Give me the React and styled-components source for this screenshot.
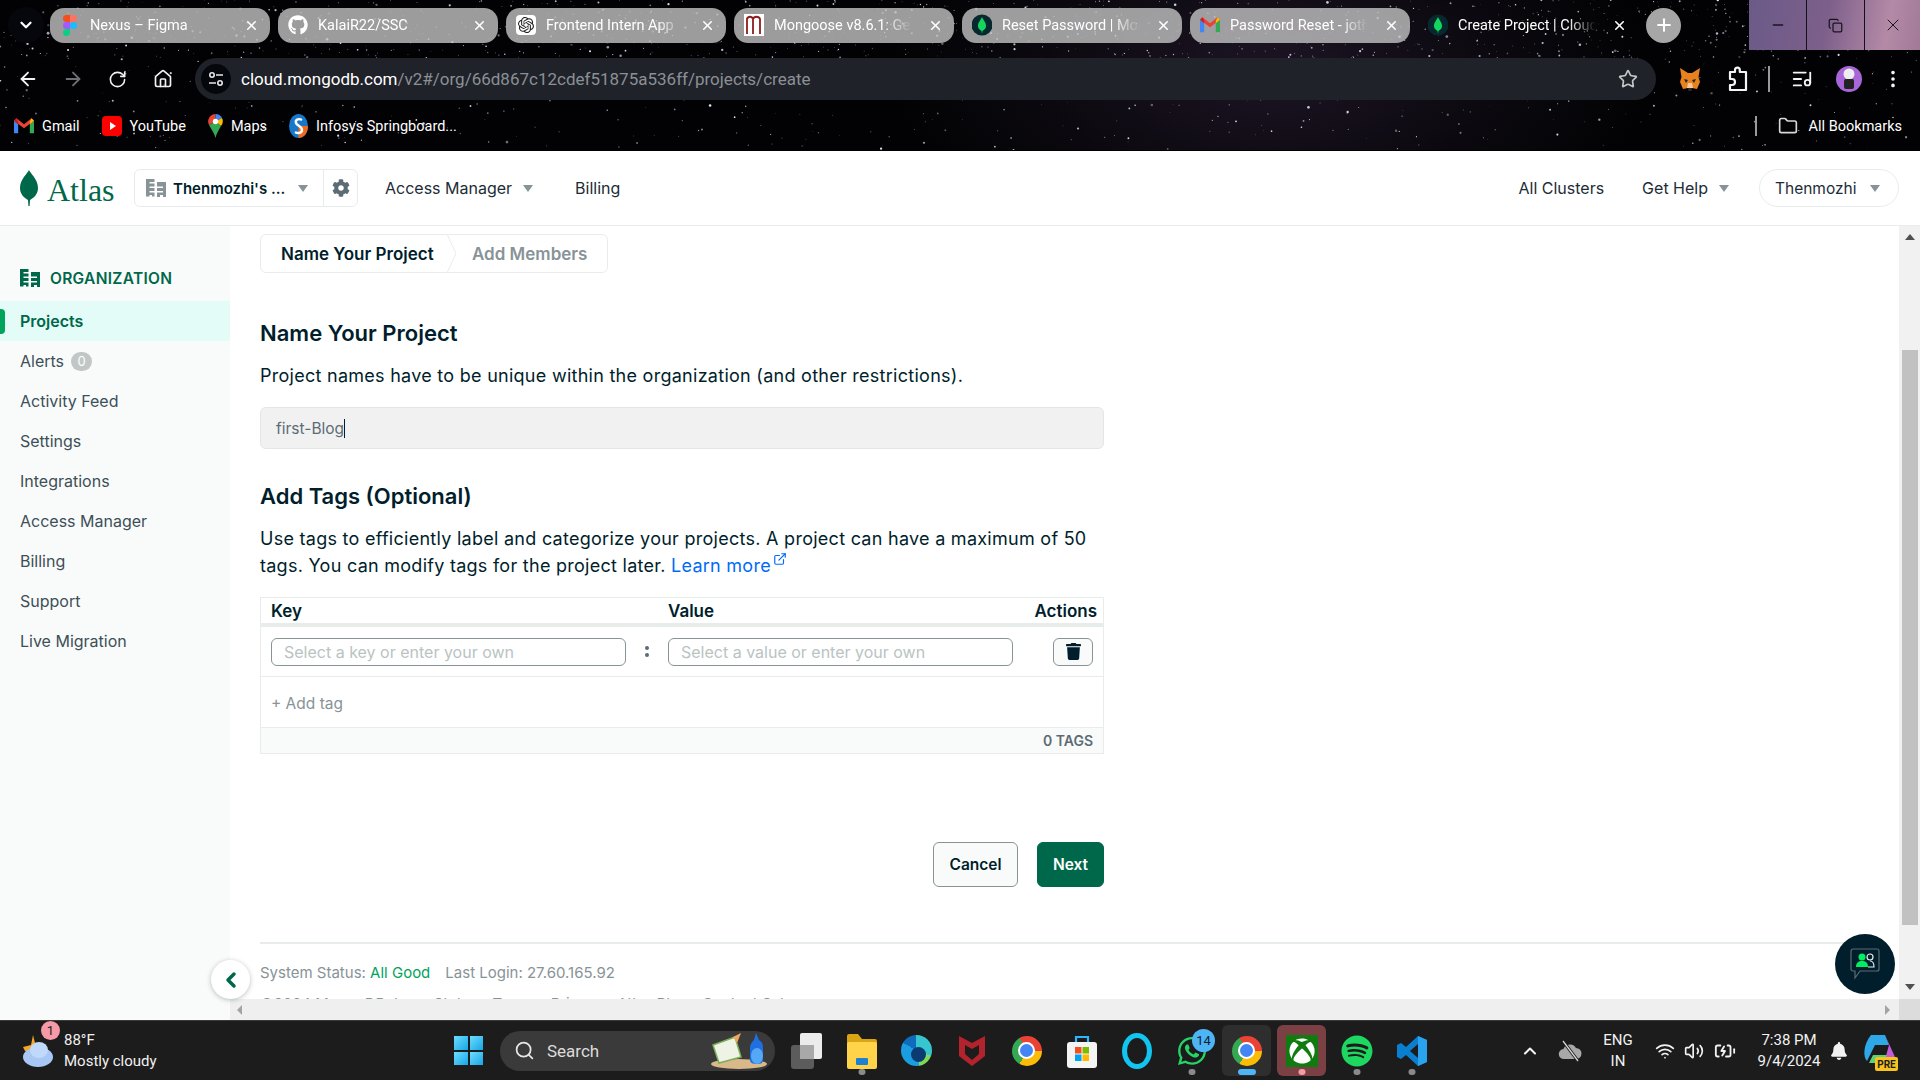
import React from "react";
import styled, { createGlobalStyle } from "styled-components";
import {
  ArrowLeft,
  ArrowRight,
  RotateCw,
  Home,
  Star,
  EllipsisVertical,
  ListMusic,
  Folder,
  Search,
  Wifi,
  Volume2,
  BatteryCharging,
  ChevronUp,
  ChevronDown,
  ChevronLeft,
  Plus,
  X,
  Minus,
  Copy,
  ExternalLink,
} from "lucide-react";
import { FaGithub, FaWhatsapp, FaSpotify, FaXbox, FaTrash, FaCog, FaBell } from "react-icons/fa";
import { SiOpenai } from "react-icons/si";

const UI = `"Inter", "Lato", sans-serif`;
const SYS = `"Roboto", "Noto Sans", sans-serif`;

const Global = createGlobalStyle`
  html, body { margin: 0; padding: 0; background: #fff; }
  * { box-sizing: border-box; }
  #root { width: 1920px; height: 1080px; overflow: hidden; }
`;

const Page = styled.div`
  width: 1920px;
  height: 1080px;
  display: flex;
  flex-direction: column;
  font-family: ${UI};
  color: #001e2b;
`;

/* browser frame */
const Frame = styled.div`
  position: relative;
  height: 151px;
  flex: none;
  background: radial-gradient(ellipse 380px 200px at 1270px 70px, #1d1424 0%, #0b090f 60%, #020204 100%);
  overflow: hidden;
  font-family: ${SYS};
  color: #fff;
  border-bottom: 1px solid #000;
`;
const StarLayer = styled.svg`
  position: absolute;
  left: 0;
  top: 0;
`;
const TabStrip = styled.div`
  position: relative;
  height: 50px;
  display: flex;
  align-items: center;
  gap: 8px;
  padding-left: 8px;
`;
const TabMenu = styled.div`
  width: 36px;
  height: 36px;
  margin-right: -2px;
  border-radius: 50%;
  background: #05070c;
  display: grid;
  place-items: center;
`;
const Tab = styled.div`
  width: 220px;
  height: 35px;
  flex: none;
  border-radius: 14px;
  background: ${(p) => (p.$active ? "transparent" : "rgba(190,190,190,0.82)")};
  display: flex;
  align-items: center;
  gap: 10px;
  padding: 0 11px 0 10px;
  font-size: 14.5px;
`;
const TabIcon = styled.span`
  width: 20px;
  height: 22px;
  flex: none;
  display: grid;
  place-items: center;
`;
const TabTitle = styled.span`
  flex: 1;
  min-width: 0;
  margin-right: 6px;
  white-space: nowrap;
  overflow: hidden;
  mask-image: linear-gradient(to right, #000 80%, transparent);
`;
const NewTab = styled.div`
  width: 35px;
  height: 35px;
  border-radius: 50%;
  background: #a6a6a6;
  display: grid;
  place-items: center;
`;
const WinControls = styled.div`
  margin-left: auto;
  width: 171px;
  height: 50px;
  display: grid;
  grid-template-columns: 57px 58px 56px;
  background: linear-gradient(100deg, #6b5a88 0%, #7d5f8b 45%, #b48aa6 80%, #a07a98 100%);
`;
const WinButton = styled.div`
  display: grid;
  place-items: center;
  color: #1a1420;
  border-left: ${(p) => (p.$line ? "1px solid #14101a" : "none")};
`;
const Toolbar = styled.div`
  position: relative;
  height: 42px;
  margin-top: 8px;
  display: flex;
  align-items: center;
  padding-left: 5px;
`;
const NavBtn = styled.div`
  width: 45px;
  display: grid;
  place-items: center;
  color: ${(p) => (p.$dim ? "#6d7076" : "#f2f2f2")};
`;
const AddressBar = styled.div`
  width: 1461px;
  height: 42px;
  margin-left: 10px;
  border-radius: 21px;
  background: #1f2229;
  display: flex;
  align-items: center;
  padding: 0 18px 0 6px;
  font-size: 17px;
`;
const SiteInfo = styled.div`
  width: 30px;
  height: 30px;
  border-radius: 50%;
  background: #05070c;
  display: grid;
  place-items: center;
  margin-right: 10px;
`;
const Url = styled.div`
  flex: 1;
  color: #8b9096;
  b {
    font-weight: 400;
    color: #fff;
  }
`;
const ToolSlot = styled.div`
  width: ${(p) => p.$w}px;
  display: grid;
  place-items: center;
  color: #f4f4f4;
`;
const ToolGroup = styled.div`
  display: flex;
  align-items: center;
  margin-left: 11px;
`;
const VBar = styled.div`
  width: 2px;
  height: ${(p) => p.$h}px;
  background: #9a9a9a;
`;
const Avatar = styled.div`
  width: 26px;
  height: 26px;
  border-radius: 50%;
  background: #a866d8;
  display: grid;
  place-items: center;
`;
const Bookmarks = styled.div`
  position: relative;
  height: 32px;
  margin-top: 10px;
  display: flex;
  align-items: center;
  gap: 22px;
  padding: 0 18px 0 14px;
  font-size: 14.5px;
`;
const Bookmark = styled.div`
  display: flex;
  align-items: center;
  gap: 8px;
`;
const BookmarkEnd = styled.div`
  margin-left: auto;
  display: flex;
  align-items: center;
  gap: 11px;
  svg {
    margin-left: 10px;
  }
`;

/* atlas header */
const Header = styled.header`
  height: 75px;
  flex: none;
  background: #fff;
  border-bottom: 1px solid #e8edeb;
  display: flex;
  align-items: center;
  padding: 0 21px 0 20px;
  font-size: 16px;
  color: #1c2d38;
`;
const Logo = styled.div`
  width: 114px;
  display: flex;
  align-items: center;
  gap: 9px;
`;
const LogoText = styled.span`
  font-family: "Liberation Serif", serif;
  font-size: 32px;
  color: #00684a;
  margin-top: 5px;
`;
const OrgPicker = styled.div`
  width: 224px;
  height: 38px;
  border: 1px solid #e8edeb;
  border-radius: 6px;
  display: flex;
  align-items: center;
`;
const OrgMain = styled.div`
  width: 189px;
  height: 100%;
  border-right: 1px solid #e8edeb;
  display: flex;
  align-items: center;
  padding-left: 11px;
  gap: 7px;
  font-size: 15px;
  font-weight: 600;
  color: #001e2b;
`;
const OrgName = styled.span`
  width: 118px;
  white-space: nowrap;
`;
const Gear = styled.div`
  flex: 1;
  display: grid;
  place-items: center;
  color: #5c6c75;
`;
const Caret = styled.span`
  width: 0;
  height: 0;
  border-left: 5.5px solid transparent;
  border-right: 5.5px solid transparent;
  border-top: 7px solid #889397;
  flex: none;
`;
const HeadLink = styled.div`
  display: flex;
  align-items: center;
  gap: 11px;
  margin-left: ${(p) => p.$ml}px;
`;
const UserPill = styled.div`
  width: 140px;
  height: 38px;
  margin-left: 30px;
  border: 1px solid #e8edeb;
  border-radius: 19px;
  display: flex;
  align-items: center;
  gap: 13px;
  padding-left: 15px;
  font-size: 15.5px;
`;

/* page body */
const Body = styled.div`
  position: relative;
  flex: 1;
  min-height: 0;
  display: flex;
`;
const Sidebar = styled.nav`
  width: 230px;
  flex: none;
  background: #f9fbfa;
  padding-top: 32px;
  font-size: 16px;
  color: #3d4f58;
`;
const SideTitle = styled.div`
  height: 40px;
  margin-bottom: 3px;
  padding-left: 20px;
  display: flex;
  align-items: center;
  gap: 10px;
  font-size: 15.5px;
  font-weight: 600;
  letter-spacing: 0.3px;
  color: #00684a;
`;
const SideItem = styled.div`
  position: relative;
  height: 40px;
  padding-left: 20px;
  display: flex;
  align-items: center;
  gap: 7px;
  background: ${(p) => (p.$active ? "#e3fcf7" : "transparent")};
  color: ${(p) => (p.$active ? "#00684a" : "inherit")};
  font-weight: ${(p) => (p.$active ? 600 : 400)};
  &::before {
    content: "";
    display: ${(p) => (p.$active ? "block" : "none")};
    position: absolute;
    left: 0;
    top: 8px;
    width: 5px;
    height: 25px;
    border-radius: 0 4px 4px 0;
    background: #00a35c;
  }
`;
const Count = styled.span`
  width: 21px;
  height: 19px;
  border-radius: 10px;
  background: #c1c7c6;
  color: #fff;
  font-size: 13px;
  display: grid;
  place-items: center;
`;
const ContentArea = styled.div`
  flex: 1;
  min-width: 0;
  display: flex;
  flex-direction: column;
`;
const ScrollRow = styled.div`
  flex: 1;
  min-height: 0;
  display: flex;
`;
const ScrollView = styled.main`
  flex: 1;
  min-width: 0;
  overflow: hidden;
  padding: 8px 14px 0 30px;
`;
const VTrack = styled.div`
  width: 21px;
  flex: none;
  background: #f1f1f1;
  display: flex;
  flex-direction: column;
  align-items: center;
  padding: 8px 0 9px;
`;
const VThumb = styled.div`
  width: 16px;
  height: 575px;
  margin-top: 110px;
  margin-bottom: auto;
  background: #c1c1c1;
`;
const HTrack = styled.div`
  height: 21px;
  flex: none;
  background: #efefef;
  display: flex;
  align-items: center;
  justify-content: space-between;
  padding: 0 30px 0 7px;
  position: relative;
`;
const Corner = styled.div`
  position: absolute;
  right: 0;
  top: 0;
  width: 21px;
  height: 21px;
  background: #dcdcdc;
`;
const Arrow = styled.span`
  width: 0;
  height: 0;
  border-style: solid;
  ${(p) =>
    p.$dir === "up"
      ? "border-width: 0 5px 6px; border-color: transparent transparent #505050;"
      : p.$dir === "down"
      ? "border-width: 6px 5px 0; border-color: #505050 transparent transparent;"
      : p.$dir === "left"
      ? "border-width: 5px 5px 5px 0; border-color: transparent #a3a3a3 transparent transparent;"
      : "border-width: 5px 0 5px 5px; border-color: transparent transparent transparent #a3a3a3;"}
`;
const Stepper = styled.div`
  width: 348px;
  height: 39px;
  border: 1px solid #e8edeb;
  border-radius: 6px;
  display: flex;
  align-items: center;
  font-size: 17px;
  font-weight: 600;
  position: relative;
`;
const Step = styled.div`
  width: ${(p) => p.$w}px;
  padding-left: ${(p) => p.$pl}px;
  color: ${(p) => (p.$on ? "#001e2b" : "#889397")};
  white-space: nowrap;
`;
const StepChevron = styled.svg`
  flex: none;
  margin-left: -2px;
`;
const Form = styled.div`
  width: 844px;
`;
const Heading = styled.h2`
  margin: ${(p) => p.$mt}px 0 0;
  font-size: 22px;
  line-height: 30px;
  font-weight: 600;
  color: #001e2b;
`;
const Para = styled.p`
  margin: 14px 0 0;
  font-size: 18px;
  letter-spacing: 0.27px;
  line-height: 27px;
  color: #001e2b;
`;
const NameField = styled.div`
  height: 42px;
  margin-top: 18px;
  background: #f1f1f1;
  border: 1px solid #e3e6e5;
  border-radius: 6px;
  padding-left: 15px;
  display: flex;
  align-items: center;
  font-size: 15.5px;
  color: #5c6c75;
`;
const TextCaret = styled.span`
  width: 1px;
  height: 19px;
  background: #001e2b;
`;
const LearnMore = styled.a`
  color: #016bf8;
  svg {
    vertical-align: 6px;
    margin-left: 2px;
  }
`;
const TagTable = styled.div`
  margin-top: 18px;
  border: 1px solid #e8edeb;
`;
const TagGrid = styled.div`
  display: grid;
  grid-template-columns: 355px 42px 345px 1fr;
  padding: 0 8px 0 10px;
  align-items: center;
`;
const TagHead = styled(TagGrid)`
  height: 29px;
  border-bottom: 4px solid #e8edeb;
  font-size: 17px;
  font-weight: 600;
  padding-right: 6px;
`;
const HeadRight = styled.span`
  justify-self: end;
`;
const TagRow = styled(TagGrid)`
  height: 50px;
  border-bottom: 1px solid #e8edeb;
`;
const TagInput = styled.input`
  width: 100%;
  height: 28px;
  border: 1px solid #889397;
  border-radius: 6px;
  padding: 0 12px;
  font: 400 16px ${UI};
  background: #fff;
  &::placeholder {
    color: #b8c4c2;
    opacity: 1;
  }
`;
const Colon = styled.span`
  justify-self: center;
  display: flex;
  flex-direction: column;
  gap: 3px;
  i {
    width: 4px;
    height: 4px;
    border-radius: 50%;
    background: #5c6c75;
  }
`;
const TrashBtn = styled.div`
  justify-self: end;
  width: 40px;
  height: 28px;
  margin-right: 2px;
  border: 1px solid #889397;
  border-radius: 6px;
  background: #f9fbfa;
  display: grid;
  place-items: center;
  color: #001e2b;
`;
const AddTag = styled.div`
  height: 50px;
  padding: 3px 0 0 10px;
  display: flex;
  align-items: center;
  font-size: 15.5px;
  color: #889397;
`;
const TagFooter = styled.div`
  height: 26px;
  border-top: 1px solid #e8edeb;
  background: #f9fbfa;
  padding-right: 10px;
  display: flex;
  align-items: center;
  justify-content: flex-end;
  font-size: 14px;
  font-weight: 600;
  color: #5c6c75;
`;
const Actions = styled.div`
  margin-top: 88px;
  display: flex;
  justify-content: flex-end;
  gap: 19px;
`;
const Button = styled.button`
  height: 45px;
  width: ${(p) => p.$w}px;
  border-radius: 6px;
  border: 1px solid ${(p) => (p.$primary ? "#00684a" : "#889397")};
  background: ${(p) => (p.$primary ? "#00684a" : "#f9fbfa")};
  color: ${(p) => (p.$primary ? "#fff" : "#001e2b")};
  font: 600 15.5px ${UI};
`;
const Rule = styled.div`
  margin-top: 55px;
  height: 2px;
  background: #e8edeb;
`;
const FootLine = styled.div`
  margin-top: ${(p) => p.$mt}px;
  display: flex;
  gap: ${(p) => p.$gap}px;
  font-size: 15px;
  line-height: 22px;
  color: #889397;
  white-space: nowrap;
  em {
    font-style: normal;
    color: #00a35c;
  }
`;
const CollapseBtn = styled.div`
  position: absolute;
  left: 211px;
  bottom: 21px;
  width: 39px;
  height: 39px;
  border-radius: 50%;
  background: #fff;
  box-shadow: 0 1px 5px rgba(0, 30, 43, 0.28);
  display: grid;
  place-items: center;
  color: #00684a;
`;
const ChatBubble = styled.div`
  position: absolute;
  right: 25px;
  bottom: 26px;
  width: 60px;
  height: 60px;
  border-radius: 50%;
  background: #001e2b;
  display: grid;
  place-items: center;
`;

/* taskbar */
const Taskbar = styled.footer`
  height: 60px;
  flex: none;
  background: #1c1c1c;
  border-top: 1px solid #3a3a3a;
  display: flex;
  align-items: center;
  padding-left: 23px;
  font-family: ${SYS};
  color: #f0f0f0;
`;
const Weather = styled.div`
  position: relative;
  width: 431px;
  display: flex;
  align-items: center;
  gap: 9px;
`;
const WeatherText = styled.div`
  font-size: 15px;
  line-height: 21px;
`;
const RedBadge = styled.span`
  position: absolute;
  left: 18px;
  top: -9px;
  width: 19px;
  height: 19px;
  border-radius: 50%;
  background: #f59aa6;
  color: #1c1c1c;
  font-size: 13px;
  display: grid;
  place-items: center;
`;
const WinLogo = styled.div`
  width: 29px;
  height: 29px;
  margin-right: 17px;
  display: grid;
  grid-template-columns: 1fr 1fr;
  gap: 2px;
  i {
    background: linear-gradient(135deg, #6fdcff, #15a6e6);
  }
`;
const SearchPill = styled.div`
  width: 275px;
  height: 40px;
  border-radius: 20px;
  background: #3a3a3a;
  display: flex;
  align-items: center;
  gap: 12px;
  padding-left: 14px;
  font-size: 17px;
  color: #dcdcdc;
`;
const SearchArt = styled.svg`
  margin-left: auto;
  margin-right: 6px;
`;
const TaskIcons = styled.div`
  margin-left: 4px;
  display: flex;
`;
const TaskSlot = styled.div`
  position: relative;
  width: 55px;
  height: 59px;
  display: grid;
  place-items: center;
  &::before {
    content: "";
    display: ${(p) => (p.$bg ? "block" : "none")};
    position: absolute;
    left: 3px;
    right: 3px;
    top: 4px;
    bottom: 4px;
    border-radius: 6px;
    background: ${(p) => p.$bg};
  }
  &::after {
    content: "";
    display: ${(p) => (p.$dot ? "block" : "none")};
    position: absolute;
    left: 50%;
    bottom: 5px;
    width: ${(p) => (p.$wide ? 18 : 7)}px;
    height: 6px;
    border-radius: 3px;
    transform: translateX(-50%);
    background: ${(p) => p.$dot};
  }
  > * {
    position: relative;
  }
`;
const CountBadge = styled.span`
  position: absolute;
  left: 28px;
  top: 8px;
  width: 23px;
  height: 23px;
  border-radius: 50%;
  background: #4db5f5;
  color: #10222e;
  font-size: 13px;
  display: grid;
  place-items: center;
`;
const ChromeMark = styled.span`
  width: ${(p) => p.$s}px;
  height: ${(p) => p.$s}px;
  border-radius: 50%;
  flex: none;
  background: conic-gradient(#ea4335 0deg 90deg, #fbbc05 90deg 210deg, #34a853 210deg 330deg, #ea4335 330deg);
  display: grid;
  place-items: center;
  &::after {
    content: "";
    width: 46%;
    height: 46%;
    border-radius: 50%;
    background: #4285f4;
    border: ${(p) => Math.round(p.$s / 14)}px solid #fff;
    box-sizing: content-box;
  }
`;
const EdgeMark = styled.span`
  width: 31px;
  height: 31px;
  border-radius: 50%;
  background: conic-gradient(#37c6d0 0deg 110deg, #7ed957 110deg 170deg, #1b9de2 170deg 300deg, #0f6cbd 300deg);
  display: grid;
  place-items: center;
  &::after {
    content: "";
    width: 15px;
    height: 15px;
    margin: 8px 0 0 4px;
    border-radius: 50%;
    background: #0c3b73;
  }
`;
const AlexaRing = styled.span`
  width: 30px;
  height: 36px;
  border-radius: 50%;
  border: 5px solid #12c4f0;
`;
const Tray = styled.div`
  margin-left: auto;
  display: flex;
  align-items: center;
  height: 100%;
`;
const TraySlot = styled.div`
  width: ${(p) => p.$w}px;
  display: grid;
  place-items: center;
  text-align: center;
  font-size: 15px;
  line-height: 21px;
  color: #f2f2f2;
  white-space: nowrap;
`;

/* drawn marks */
function Leaf({ h = 36, color = "#00684a" }) {
  return (
    <svg width={h / 2} height={h} viewBox="0 0 18 36">
      <path
        d="M9 0C10 3 18 9 18 18C18 25 13 28 10 30L9.6 36H8.4L8 30C5 28 0 25 0 18C0 9 8 3 9 0Z"
        fill={color}
      />
    </svg>
  );
}

function LeafBadge() {
  return (
    <svg width="20" height="22" viewBox="0 0 20 22">
      <circle cx="10" cy="11" r="10.5" fill="#07282f" />
      <path d="M10 3C11 6 14 8 14 12C14 15 11.5 16 10.5 17L10 20L9.5 17C8.5 16 6 15 6 12C6 8 9 6 10 3Z" fill="#13d65f" />
    </svg>
  );
}

function OrgIcon({ color, size = 20 }) {
  return (
    <svg width={size} height={size} viewBox="0 0 20 20" fill={color}>
      <path d="M0 1h8.5v3H3.5v1.5h5v3h-5V10h5v3h-5v1.5h5v4H6v-1.5H3.5v1.5H0z" />
      <path d="M11 4h9v15h-3v-2h-3v2h-3v-4.5h6V13h-6v-3h6V8.5h-6z" />
    </svg>
  );
}

function GmailMark({ size = 20 }) {
  return (
    <svg width={size} height={size * 0.78} viewBox="0 0 24 18">
      <path d="M0 3v15h5V7z" fill="#4285f4" />
      <path d="M24 3v15h-5V7z" fill="#34a853" />
      <path d="M0 3l12 9 12-9-3-3-9 7-9-7z" fill="#ea4335" />
      <path d="M19 7v-3l2-4 3 3z" fill="#fbbc05" />
      <path d="M5 7V4L3 0 0 3z" fill="#c5221f" />
    </svg>
  );
}

function FigmaMark() {
  return (
    <svg width="14" height="21" viewBox="0 0 14 21">
      <path d="M0 3.5A3.5 3.5 0 0 1 3.5 0H7v7H3.5A3.5 3.5 0 0 1 0 3.5z" fill="#f24e1e" />
      <path d="M7 0h3.5a3.5 3.5 0 0 1 0 7H7z" fill="#ff7262" />
      <path d="M0 10.5A3.5 3.5 0 0 1 3.5 7H7v7H3.5A3.5 3.5 0 0 1 0 10.5z" fill="#a259ff" />
      <circle cx="10.5" cy="10.5" r="3.5" fill="#1abcfe" />
      <path d="M0 17.5A3.5 3.5 0 0 1 3.5 14H7v3.5a3.5 3.5 0 0 1-7 0z" fill="#0acf83" />
    </svg>
  );
}

function MongooseMark() {
  return (
    <svg width="20" height="22" viewBox="0 0 20 22">
      <rect width="20" height="22" fill="#fff" />
      <path d="M3 20V4M3 5C4 2 8 2 9 5V20M9 5C10 2 15 2 16 5V20" stroke="#8e1c1c" strokeWidth="1.8" fill="none" />
    </svg>
  );
}

function YoutubeMark() {
  return (
    <svg width="20" height="20" viewBox="0 0 20 20">
      <rect width="20" height="20" rx="4" fill="#f00" />
      <path d="M8 6l6 4-6 4z" fill="#fff" />
    </svg>
  );
}

function MapsPin() {
  return (
    <svg width="15" height="24" viewBox="0 0 15 24">
      <path d="M7.5 0A7.5 7.5 0 0 0 1 11L7.5 7.5z" fill="#ea4335" />
      <path d="M7.5 0A7.5 7.5 0 0 1 14 4L7.5 7.5z" fill="#4285f4" />
      <path d="M14 4A7.5 7.5 0 0 1 13 12L7.5 7.5z" fill="#fbbc05" />
      <path d="M1 11L7.5 7.5 13 12C11 16 8.5 19 7.5 24C6.5 19 3 15 1 11z" fill="#34a853" />
      <circle cx="7.5" cy="7.5" r="2.7" fill="#fff" />
    </svg>
  );
}

function InfosysMark() {
  return (
    <svg width="19" height="24" viewBox="0 0 19 24">
      <ellipse cx="9.5" cy="12" rx="9.5" ry="12" fill="#1877c9" />
      <path d="M9.5 12H19C19 19 15 24 9.5 24z" fill="#f06a21" />
      <path d="M13 6C9 4 6 6 7 9C8 12 13 12 13 16C13 19 9 20 6 18" stroke="#fff" strokeWidth="2.4" fill="none" />
    </svg>
  );
}

function FoxMark() {
  return (
    <svg width="22" height="24" viewBox="0 0 22 24">
      <path d="M1 1l8 5h4l8-5-1.5 9 1.5 5-3 7-5-1H9l-5 1-3-7 1.5-5z" fill="#e8821e" />
      <path d="M9 21h4l-.5 3h-3z" fill="#2a2a2a" />
      <path d="M5 12l4 1-2 3zM17 12l-4 1 2 3z" fill="#23262a" />
      <path d="M9 16h4l1 5H8z" fill="#f6c8a0" />
    </svg>
  );
}

function PuzzleMark() {
  return (
    <svg width="22" height="26" viewBox="0 0 22 26" fill="none" stroke="#f4f4f4" strokeWidth="2.2" strokeLinejoin="round">
      <path d="M4 6h5V4a2.4 2.4 0 0 1 4.8 0v2H20v18H4v-5h2a3 3 0 0 0 0-6H4z" />
    </svg>
  );
}

function SiteInfoMark() {
  return (
    <svg width="18" height="18" viewBox="0 0 18 18" fill="none" stroke="#e8e8e8" strokeWidth="1.6">
      <circle cx="5" cy="5" r="2.2" />
      <path d="M9 5h7M2 13h7" />
      <circle cx="13" cy="13" r="2.2" />
    </svg>
  );
}

function ShieldMark() {
  return (
    <svg width="26" height="30" viewBox="0 0 26 30">
      <path d="M0 0l13 7 13-7v20l-13 10L0 20z" fill="#b3232d" />
      <path d="M6 9l7 4 7-4v9l-7 6-7-6z" fill="#1c1c1c" />
    </svg>
  );
}

function StoreMark() {
  return (
    <svg width="30" height="34" viewBox="0 0 30 34">
      <path d="M9 9V3h12v6" stroke="#2fb5ff" strokeWidth="2.2" fill="none" />
      <rect y="8" width="30" height="26" rx="3" fill="#f4f4f4" />
      <rect x="8" y="13" width="6.5" height="6.5" fill="#f25022" />
      <rect x="15.5" y="13" width="6.5" height="6.5" fill="#7fba00" />
      <rect x="8" y="20.5" width="6.5" height="6.5" fill="#00a4ef" />
      <rect x="15.5" y="20.5" width="6.5" height="6.5" fill="#ffb900" />
    </svg>
  );
}

function CodeMark() {
  return (
    <svg width="30" height="30" viewBox="0 0 30 30">
      <path d="M21 0l9 4v22l-9 4-12-11-5 4-4-2V9l4-2 5 4z" fill="#0a7fd0" />
      <path d="M21 0l9 4v22l-9 4z" fill="#2aa3ef" />
      <path d="M21 8l-8 7 8 7z" fill="#1c1c1c" />
    </svg>
  );
}

function FilesMark() {
  return (
    <svg width="30" height="36" viewBox="0 0 30 36">
      <path d="M0 3a2 2 0 0 1 2-2h9l4 5h13a2 2 0 0 1 2 2v4H0z" fill="#d9a514" />
      <rect y="9" width="30" height="27" rx="2" fill="#ffd44a" />
      <rect x="9" y="25" width="12" height="7" rx="1" fill="#1f7fd0" />
    </svg>
  );
}

function TaskViewMark() {
  return (
    <svg width="31" height="36" viewBox="0 0 31 36">
      <rect y="12" width="23" height="24" rx="3" fill="#5c5c5c" />
      <rect x="9" width="22" height="26" rx="2" fill="#ececec" />
      <rect x="9" y="12" width="14" height="14" fill="#a8a8a8" />
    </svg>
  );
}

function WeatherMark() {
  return (
    <svg width="32" height="36" viewBox="0 0 32 36">
      <path d="M10 2l2 8 8 2-3 6H2l-2-4 8-2z" fill="#f5a623" />
      <ellipse cx="15" cy="24" rx="15" ry="10" fill="#a9c7f5" />
      <ellipse cx="16" cy="17" rx="9" ry="8" fill="#c0d8fa" />
    </svg>
  );
}

function CopilotMark() {
  return (
    <svg width="36" height="40" viewBox="0 0 36 40">
      <path d="M8 4h14l4 10H12L4 30C0 26 0 14 8 4z" fill="#2fa8e8" />
      <path d="M22 4l10 22c1 3 0 6-3 6h-8L26 14z" fill="#c45bd8" />
      <path d="M10 24h14l-4 8H6z" fill="#5ad17a" />
      <rect x="12" y="26" width="23" height="14" rx="2" fill="#f7c31c" />
      <text x="23.5" y="37" fontSize="10" fontWeight="700" textAnchor="middle" fill="#1c1c1c" fontFamily="Roboto, sans-serif">PRE</text>
    </svg>
  );
}

function SearchArtMark() {
  return (
    <SearchArt width="60" height="40" viewBox="0 0 60 40">
      <ellipse cx="30" cy="33" rx="28" ry="5" fill="#d9b98a" />
      <path d="M4 14l22-8 6 20-22 6z" fill="#eef3e5" stroke="#7cae5a" strokeWidth="1.5" />
      <path d="M24 6l8-4-4 10z" fill="#f0a55c" />
      <path d="M47 2l3 7c3 2 4 4 4 8v12c0 3-2 4-6 4s-7-1-7-4V17c0-4 2-6 4-8z" fill="#1f6fe0" />
      <ellipse cx="48" cy="25" rx="6" ry="8" fill="#55a8f5" />
    </SearchArt>
  );
}

function ChatMark() {
  return (
    <svg width="30" height="32" viewBox="0 0 30 32">
      <path d="M3 1h24a2 2 0 0 1 2 2v18a2 2 0 0 1-2 2H10l-5 7v-7H3a2 2 0 0 1-2-2V3a2 2 0 0 1 2-2z" fill="none" stroke="#5c6c75" strokeWidth="1.2" />
      <circle cx="12" cy="9" r="3.5" fill="#00ed64" />
      <path d="M6 19c0-5 3-6 6-6s6 1 6 6z" fill="#00ed64" />
      <circle cx="20" cy="9" r="3" fill="none" stroke="#e8edeb" strokeWidth="1.2" />
      <path d="M18 19h6c0-4-2-6-4-6" fill="none" stroke="#e8edeb" strokeWidth="1.2" />
    </svg>
  );
}

function MutedCloud() {
  return (
    <svg width="24" height="22" viewBox="0 0 24 22">
      <path d="M6 19a5 5 0 0 1-.5-10A7 7 0 0 1 18 8a5.5 5.5 0 0 1 0 11z" fill="#a8a8a8" />
      <path d="M5 1l15 20" stroke="#1c1c1c" strokeWidth="3" />
      <path d="M5 1l15 20" stroke="#d8d8d8" strokeWidth="1.3" />
    </svg>
  );
}

/* seeded star field, the wallpaper behind the browser frame */
function makeStars() {
  let seed = 7;
  const rnd = () => {
    seed = (seed * 16807) % 2147483647;
    return seed / 2147483647;
  };
  const out = [];
  for (let i = 0; i < 1500; i++) {
    const y = rnd() < 0.72 ? rnd() * 58 : 58 + rnd() * 92;
    out.push({ x: rnd() * 1920, y, r: 0.35 + rnd() * rnd() * 1.1, o: 0.25 + rnd() * 0.75 });
  }
  return out;
}
const stars = makeStars();

const tabs = [
  { title: "Nexus – Figma", icon: <FigmaMark /> },
  { title: "KalaiR22/SSC", icon: <FaGithub size={20} color="#fff" /> },
  { title: "Frontend Intern App", icon: <SiOpenai size={20} color="#222" style={{ background: "#fff", borderRadius: 4, padding: 2 }} /> },
  { title: "Mongoose v8.6.1: Getting", icon: <MongooseMark /> },
  { title: "Reset Password | MongoDB", icon: <LeafBadge /> },
  { title: "Password Reset - jothi", icon: <GmailMark size={20} /> },
  { title: "Create Project | Cloud", icon: <LeafBadge />, active: true },
];

const sideItems = ["Alerts", "Activity Feed", "Settings", "Integrations", "Access Manager", "Billing", "Support", "Live Migration"];

const taskItems = [
  { el: <TaskViewMark /> },
  { el: <FilesMark />, dot: "#8a8a8a" },
  { el: <EdgeMark /> },
  { el: <ShieldMark /> },
  { el: <ChromeMark $s={30} /> },
  { el: <StoreMark /> },
  { el: <AlexaRing /> },
  { el: <FaWhatsapp size={32} color="#25d366" />, dot: "#8a8a8a", badge: "14" },
  { el: <ChromeMark $s={30} />, bg: "#2e2e2e", dot: "#4db5f5", wide: true },
  { el: <FaXbox size={32} color="#fff" style={{ background: "#107c10", padding: 3 }} />, bg: "#7a4044", dot: "#f59aa6" },
  { el: <FaSpotify size={32} color="#1ed760" />, dot: "#8a8a8a" },
  { el: <CodeMark />, dot: "#8a8a8a" },
];

export default function App() {
  return (
    <Page>
      <Global />
      <Frame>
        <StarLayer width="1920" height="150">
          {stars.map((s, i) => (
            <circle key={i} cx={s.x} cy={s.y} r={s.r} fill="#e6e8ff" opacity={s.o} />
          ))}
        </StarLayer>
        <TabStrip>
          <TabMenu>
            <ChevronDown size={18} color="#fff" strokeWidth={3} />
          </TabMenu>
          {tabs.map((t) => (
            <Tab key={t.title} $active={t.active}>
              <TabIcon>{t.icon}</TabIcon>
              <TabTitle>{t.title}</TabTitle>
              <X size={15} color="#fff" strokeWidth={2.5} />
            </Tab>
          ))}
          <NewTab>
            <Plus size={20} color="#fff" strokeWidth={2.5} />
          </NewTab>
          <WinControls>
            <WinButton>
              <Minus size={16} />
            </WinButton>
            <WinButton $line>
              <Copy size={15} />
            </WinButton>
            <WinButton $line>
              <X size={20} strokeWidth={1.2} />
            </WinButton>
          </WinControls>
        </TabStrip>
        <Toolbar>
          <NavBtn>
            <ArrowLeft size={22} />
          </NavBtn>
          <NavBtn $dim>
            <ArrowRight size={22} />
          </NavBtn>
          <NavBtn>
            <RotateCw size={19} />
          </NavBtn>
          <NavBtn>
            <Home size={20} />
          </NavBtn>
          <AddressBar>
            <SiteInfo>
              <SiteInfoMark />
            </SiteInfo>
            <Url>
              <b>cloud.mongodb.com</b>/v2#/org/66d867c12cdef51875a536ff/projects/create
            </Url>
            <Star size={20} color="#c6c6c6" />
          </AddressBar>
          <ToolGroup>
            <ToolSlot $w={46}>
              <FoxMark />
            </ToolSlot>
            <ToolSlot $w={48}>
              <PuzzleMark />
            </ToolSlot>
            <ToolSlot $w={16}>
              <VBar $h={26} />
            </ToolSlot>
            <ToolSlot $w={50}>
              <ListMusic size={22} />
            </ToolSlot>
            <ToolSlot $w={44}>
              <Avatar>
                <svg width="14" height="22" viewBox="0 0 14 22">
                  <circle cx="7" cy="6" r="5.5" fill="#eee" />
                  <rect x="2" y="11" width="10" height="10" rx="2" fill="#222" />
                </svg>
              </Avatar>
            </ToolSlot>
            <ToolSlot $w={44}>
              <EllipsisVertical size={22} />
            </ToolSlot>
          </ToolGroup>
        </Toolbar>
        <Bookmarks>
          <Bookmark>
            <GmailMark />
            Gmail
          </Bookmark>
          <Bookmark>
            <YoutubeMark />
            YouTube
          </Bookmark>
          <Bookmark>
            <MapsPin />
            Maps
          </Bookmark>
          <Bookmark>
            <InfosysMark />
            Infosys Springboard...
          </Bookmark>
          <BookmarkEnd>
            <VBar $h={20} />
            <Folder size={20} color="#d8d8d8" />
            All Bookmarks
          </BookmarkEnd>
        </Bookmarks>
      </Frame>

      <Header>
        <Logo>
          <Leaf />
          <LogoText>Atlas</LogoText>
        </Logo>
        <OrgPicker>
          <OrgMain>
            <OrgIcon color="#889397" />
            <OrgName>Thenmozhi's ...</OrgName>
            <Caret />
          </OrgMain>
          <Gear>
            <FaCog size={18} />
          </Gear>
        </OrgPicker>
        <HeadLink $ml={27}>
          Access Manager
          <Caret />
        </HeadLink>
        <HeadLink $ml={42}>Billing</HeadLink>
        <HeadLink style={{ marginLeft: "auto" }}>All Clusters</HeadLink>
        <HeadLink $ml={38}>
          Get Help
          <Caret />
        </HeadLink>
        <UserPill>
          Thenmozhi
          <Caret />
        </UserPill>
      </Header>

      <Body>
        <Sidebar>
          <SideTitle>
            <OrgIcon color="#00684a" />
            ORGANIZATION
          </SideTitle>
          <SideItem $active>Projects</SideItem>
          {sideItems.map((name) => (
            <SideItem key={name}>
              {name}
              {name === "Alerts" && <Count>0</Count>}
            </SideItem>
          ))}
        </Sidebar>
        <ContentArea>
          <ScrollRow>
            <ScrollView>
              <Stepper>
                <Step $on $w={187} $pl={20}>
                  Name Your Project
                </Step>
                <StepChevron width="11" height="39" viewBox="0 0 11 39">
                  <path d="M1 0l9 19.5L1 39" fill="none" stroke="#e8edeb" />
                </StepChevron>
                <Step $w={150} $pl={15}>
                  Add Members
                </Step>
              </Stepper>
              <Form>
                <Heading $mt={45}>Name Your Project</Heading>
                <Para>Project names have to be unique within the organization (and other restrictions).</Para>
                <NameField>
                  first-Blog
                  <TextCaret />
                </NameField>
                <Heading $mt={32}>Add Tags (Optional)</Heading>
                <Para>
                  Use tags to efficiently label and categorize your projects. A project can have a maximum of 50 tags. You can modify tags for the project later.{" "}
                  <LearnMore>
                    Learn more
                    <ExternalLink size={14} />
                  </LearnMore>
                </Para>
                <TagTable>
                  <TagHead>
                    <span>Key</span>
                    <span />
                    <span>Value</span>
                    <HeadRight>Actions</HeadRight>
                  </TagHead>
                  <TagRow>
                    <TagInput placeholder="Select a key or enter your own" readOnly />
                    <Colon>
                      <i />
                      <i />
                    </Colon>
                    <TagInput placeholder="Select a value or enter your own" readOnly />
                    <TrashBtn>
                      <FaTrash size={17} />
                    </TrashBtn>
                  </TagRow>
                  <AddTag>+ Add tag</AddTag>
                  <TagFooter>0 TAGS</TagFooter>
                </TagTable>
                <Actions>
                  <Button $w={85}>Cancel</Button>
                  <Button $primary $w={67}>
                    Next
                  </Button>
                </Actions>
              </Form>
              <Rule />
              <FootLine $mt={18} $gap={15}>
                <span>
                  System Status: <em>All Good</em>
                </span>
                <span>Last Login: 27.60.165.92</span>
              </FootLine>
              <FootLine $mt={9} $gap={14}>
                <span>©2024 MongoDB, Inc.</span>
                <span>Status</span>
                <span>Terms</span>
                <span>Privacy</span>
                <span>Atlas Blog</span>
                <span>Contact Sales</span>
              </FootLine>
            </ScrollView>
            <VTrack>
              <Arrow $dir="up" />
              <VThumb />
              <Arrow $dir="down" />
            </VTrack>
          </ScrollRow>
          <HTrack>
            <Arrow $dir="left" />
            <Arrow $dir="right" />
            <Corner />
          </HTrack>
        </ContentArea>
        <CollapseBtn>
          <ChevronLeft size={24} strokeWidth={3.5} />
        </CollapseBtn>
        <ChatBubble>
          <ChatMark />
        </ChatBubble>
      </Body>

      <Taskbar>
        <Weather>
          <WeatherMark />
          <RedBadge>1</RedBadge>
          <WeatherText>
            88°F
            <br />
            Mostly cloudy
          </WeatherText>
        </Weather>
        <WinLogo>
          <i />
          <i />
          <i />
          <i />
        </WinLogo>
        <SearchPill>
          <Search size={21} color="#e6e6e6" />
          Search
          <SearchArtMark />
        </SearchPill>
        <TaskIcons>
          {taskItems.map((t, i) => (
            <TaskSlot key={i} $bg={t.bg} $dot={t.dot} $wide={t.wide}>
              {t.el}
              {t.badge && <CountBadge>{t.badge}</CountBadge>}
            </TaskSlot>
          ))}
        </TaskIcons>
        <Tray>
          <TraySlot $w={40}>
            <ChevronUp size={20} strokeWidth={2.5} />
          </TraySlot>
          <TraySlot $w={40}>
            <MutedCloud />
          </TraySlot>
          <TraySlot $w={56}>
            ENG
            <br />
            IN
          </TraySlot>
          <TraySlot $w={38}>
            <Wifi size={20} />
          </TraySlot>
          <TraySlot $w={18}>
            <Volume2 size={20} />
          </TraySlot>
          <TraySlot $w={46}>
            <BatteryCharging size={22} />
          </TraySlot>
          <TraySlot $w={82}>
            7:38 PM
            <br />
            9/4/2024
          </TraySlot>
          <TraySlot $w={12}>
            <FaBell size={18} />
          </TraySlot>
          <TraySlot $w={78}>
            <CopilotMark />
          </TraySlot>
        </Tray>
      </Taskbar>
    </Page>
  );
}
